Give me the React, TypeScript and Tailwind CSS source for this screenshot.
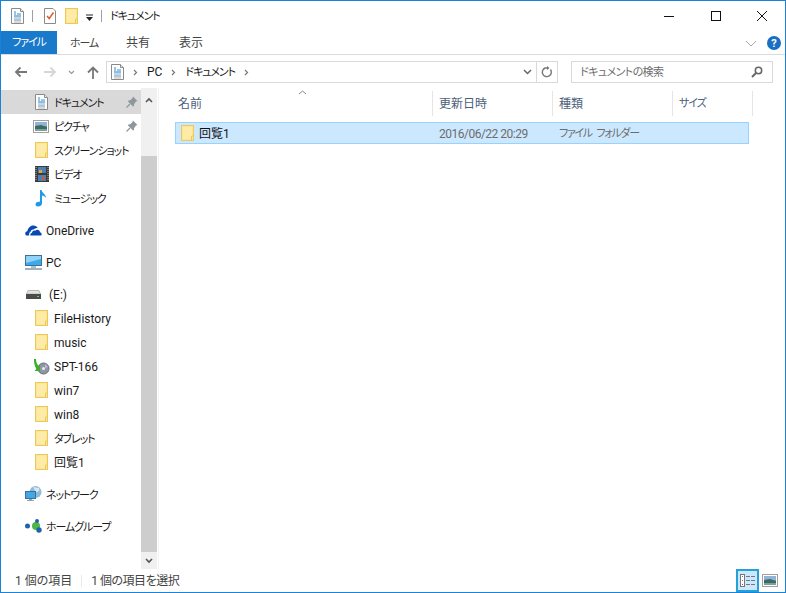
const kana = 'text-[11px] tracking-[-1.1px]';

function Folder({ className = '' }: { className?: string }) {
  return (
    <svg width="13" height="16" viewBox="0 0 13 16" className={className}>
      <rect x=".5" y=".5" width="12" height="15" fill="#fde68f" stroke="#ecc95c" />
      <rect x="2" y="2" width="9" height="12" fill="#feeba8" />
      <path d="M12 11H10.5V15" stroke="#ecc95c" fill="none" />
    </svg>
  );
}

function DocIcon() {
  return (
    <svg width="13" height="16" viewBox="0 0 13 16">
      <path d="M.5 .5H9.5L12.5 3.5V15.5H.5Z" fill="#fff" stroke="#8a8a8a" />
      <path d="M9.5 .5V3.5H12.5" fill="#e8e8e8" stroke="#8a8a8a" />
      <path d="M3 4H5M3 6H5" stroke="#2b8fd8" />
      <path d="M6 6H10" stroke="#2b8fd8" />
      <path d="M3 8H10" stroke="#1c7cc8" />
      <path d="M3 10H10" stroke="#6fb4e4" />
      <path d="M3 12H10" stroke="#7d8790" />
      <path d="M3 14H10" stroke="#b0b6bb" />
    </svg>
  );
}

function Pin() {
  return (
    <svg width="12" height="12" viewBox="0 0 12 12">
      <path d="M7 .5L11.5 5L10 5.5L8 8.2V10L7 10.5L1.8 5.3L2.5 4.5L4.2 4.2L6.5 2Z" fill="#8f979e" />
      <path d="M4 8L.5 11.5" stroke="#8f979e" strokeWidth="1.2" />
    </svg>
  );
}

function Picture() {
  return (
    <svg width="16" height="13" viewBox="0 0 16 13">
      <rect x=".5" y=".5" width="15" height="12" fill="#fff" stroke="#a0a0a0" />
      <rect x="2" y="2" width="12" height="4" fill="#8fb4d8" />
      <rect x="2" y="6" width="12" height="5" fill="#7ba39a" />
      <path d="M2 6L8 5L14 7V9H2Z" fill="#3f6a60" />
    </svg>
  );
}

function Film() {
  return (
    <svg width="14" height="16" viewBox="0 0 14 16">
      <rect width="14" height="16" fill="#3a3a3a" />
      <path d="M1 1V15M13 1V15" stroke="#bbb" strokeDasharray="1 1" />
      <rect x="3" y="1" width="8" height="6" fill="#4b7fb5" />
      <rect x="3" y="9" width="8" height="6" fill="#4b7fb5" />
      <rect x="4" y="4" width="3" height="3" fill="#d9a93a" />
      <rect x="7" y="11" width="3" height="3" fill="#c85a3a" />
    </svg>
  );
}

function Note() {
  return (
    <svg width="12" height="18" viewBox="0 0 12 18">
      <path d="M5 1H6.5C7 4 11 5 11 9C10 7.5 8.5 6.5 7 6.5V14.5C7 16.5 5 17.5 3 17.5C1.5 17.5 .5 16.5 .5 15.2C.5 13.5 2.5 12.3 5 12.8Z" fill="#1d9be8" />
    </svg>
  );
}

function Cloud() {
  return (
    <svg width="17" height="11" viewBox="0 0 17 11">
      <path d="M1 10.5C-.5 9 .2 6.5 2.3 6.3C3 2.5 6 .5 8.5 .5C10.5 .5 12 1.5 12.7 3C11 3 9.5 3.5 8.8 4.5C7 4.2 5.5 5.5 5.5 7C4.5 7.2 3.8 8.5 4.2 10.5Z" fill="#094ab2" />
      <path d="M5.5 10.5C5 9 5.8 8 7 8C7 6 9 5 10.2 5.8C11.5 3.8 15 4.5 15 7.2C16.5 7.5 17.3 9.5 16 10.5Z" fill="#094ab2" />
    </svg>
  );
}

function Monitor() {
  return (
    <svg width="17" height="15" viewBox="0 0 17 15">
      <rect x=".5" y=".5" width="16" height="10" fill="#3ea8ea" stroke="#3f6f93" />
      <path d="M1 1H16V4L1 8Z" fill="#8fd4f8" />
      <rect x="6" y="11" width="5" height="2" fill="#a9c0cf" />
      <rect x="0" y="13" width="17" height="2" fill="#9fb2c0" />
    </svg>
  );
}

function Drive() {
  return (
    <svg width="15" height="9" viewBox="0 0 15 9">
      <path d="M2 .5H13L14.5 4H.5Z" fill="#e2e2e2" stroke="#b8b8b8" />
      <rect y="4" width="15" height="5" fill="#4a4a4a" />
      <rect x="11" y="6" width="2" height="1" fill="#42e04a" />
    </svg>
  );
}

function Disc() {
  return (
    <svg width="17" height="17" viewBox="0 0 17 17">
      <circle cx="10.5" cy="10.5" r="5.5" fill="#8d96a3" stroke="#666d78" />
      <circle cx="10.5" cy="10.5" r="1.6" fill="#e8e8e8" />
      <path d="M12 6L15 9L12 10Z" fill="#c8b5d9" />
      <path d="M1 1H3C3 4 4 6 5.5 8L7 7V13H1.5L3.3 11C1.5 8 .8 4 1 1Z" fill="#3fae2a" />
    </svg>
  );
}

function Network() {
  return (
    <svg width="17" height="16" viewBox="0 0 17 16">
      <circle cx="10.5" cy="6" r="6" fill="#8fbad8" />
      <path d="M8 1C10 3 9 5 11 6C14 6 15 4 14 2Z" fill="#d8e6ef" />
      <rect x=".5" y="5.5" width="10" height="7" fill="#3ea8ea" stroke="#3f6f93" />
      <rect x="4" y="13" width="3" height="1" fill="#8fa3b0" />
      <rect x="2" y="14" width="7" height="1" fill="#8fa3b0" />
    </svg>
  );
}

function HomeGroup() {
  return (
    <svg width="17" height="14" viewBox="0 0 17 14">
      <circle cx="2.5" cy="7" r="2.5" fill="#1e62ad" />
      <circle cx="11" cy="7" r="4" fill="#4fb548" />
      <circle cx="12" cy="2" r="2" fill="#1e62ad" />
      <circle cx="14" cy="11" r="2.7" fill="#1e62ad" />
    </svg>
  );
}

function Check() {
  return (
    <svg width="12" height="16" viewBox="0 0 12 16">
      <path d="M.5 .5H9L11.5 3V15.5H.5Z" fill="#fff" stroke="#8a8a8a" />
      <path d="M3 8L5.2 10.5L9.5 4.5" stroke="#e2592a" strokeWidth="1.5" fill="none" />
    </svg>
  );
}

function Crumb() {
  return (
    <svg width="5" height="7" viewBox="0 0 5 7" className="ml-[9px]">
      <path d="M1 1L3.5 3.5L1 6" stroke="#777" strokeWidth="1.2" fill="none" />
    </svg>
  );
}

function NavRow({
  icon,
  label,
  indent = 'w-[53px] pl-[34px]',
  pin,
  selected,
}: {
  icon: React.ReactNode;
  label: string;
  indent?: string;
  pin?: boolean;
  selected?: boolean;
}) {
  const isKana = /[\u30A0-\u30FF]/.test(label);
  return (
    <div className={`h-6 flex items-center ${selected ? 'bg-[#d9d9d9]' : ''}`}>
      <div className={`${indent} flex items-center shrink-0`}>{icon}</div>
      <span className={`flex-1 pt-[2px] whitespace-nowrap ${isKana ? kana : ''}`}>{label}</span>
      {pin && (
        <span className="mr-[3px] flex">
          <Pin />
        </span>
      )}
    </div>
  );
}

const rootIndent = 'w-[45px] pl-[24px]';

function HeaderCell({ label, className }: { label: string; className: string }) {
  return (
    <div className={`${className} h-[25px] flex items-center border-r border-[#e5e5e5] text-[#4c607a] shrink-0`}>
      {label}
    </div>
  );
}

export default function App() {
  return (
    <div className="w-[786px] h-[593px] border border-[#1883d7] bg-white flex flex-col text-[12px] leading-none text-[#1a1a1a] overflow-hidden [font-family:Roboto,'Noto_Sans_CJK_JP',sans-serif] [font-feature-settings:'palt']">
      {/* title bar */}
      <div className="h-[30px] flex items-center shrink-0">
        <div className="ml-[10px] flex"><DocIcon /></div>
        <div className="ml-[8px] w-px h-[12px] bg-[#a0a0a0]" />
        <div className="ml-[11px] flex"><Check /></div>
        <div className="ml-[9px] flex"><Folder /></div>
        <svg width="9" height="8" viewBox="0 0 9 8" className="ml-[7px] mt-[3px]">
          <path d="M1 1H8" stroke="#222" />
          <path d="M1 3H8L4.5 7Z" fill="#222" />
        </svg>
        <div className="ml-[7px] w-px h-[12px] bg-[#a0a0a0]" />
        <span className={`ml-[8px] ${kana}`}>ドキュメント</span>
        <div className="ml-auto flex items-center">
          <svg width="47" height="30" viewBox="0 0 47 30"><path d="M18 15.5H28" stroke="#111" /></svg>
          <svg width="46" height="30" viewBox="0 0 46 30"><rect x="18.5" y="10.5" width="9" height="9" fill="none" stroke="#111" /></svg>
          <svg width="46" height="30" viewBox="0 0 46 30"><path d="M18 10L28 20M28 10L18 20" stroke="#111" /></svg>
        </div>
      </div>

      {/* ribbon tabs */}
      <div className="h-[24px] pt-[1px] flex items-stretch border-b border-[#dadbdc] shrink-0">
        <div className={`w-[56px] -mt-[1px] bg-[#1979ca] text-white flex items-center justify-center ${kana}`}>ファイル</div>
        <div className={`w-[54px] text-[#444] flex items-center justify-center ${kana}`}>ホーム</div>
        <div className="w-[54px] text-[#444] flex items-center justify-center">共有</div>
        <div className="w-[52px] text-[#444] flex items-center justify-center">表示</div>
        <div className="ml-auto flex items-center">
          <svg width="12" height="7" viewBox="0 0 12 7" className="mr-[10px]"><path d="M1 1L6 6L11 1" stroke="#aaa" fill="none" /></svg>
          <div className="w-[14px] h-[14px] mr-[4px] rounded-full bg-[#1a6fc2] text-white text-[11px] font-bold flex items-center justify-center">?</div>
        </div>
      </div>

      {/* address row */}
      <div className="h-[33px] pt-[1px] flex items-center shrink-0">
        <svg width="14" height="12" viewBox="0 0 14 12" className="ml-[13px]"><path d="M13 6H2M6.5 1.5L2 6L6.5 10.5" stroke="#777" strokeWidth="1.8" fill="none" /></svg>
        <svg width="14" height="12" viewBox="0 0 14 12" className="ml-[15px]"><path d="M1 6H12M7.5 1.5L12 6L7.5 10.5" stroke="#d6d6d6" strokeWidth="1.8" fill="none" /></svg>
        <svg width="7" height="5" viewBox="0 0 7 5" className="ml-[11px]"><path d="M1 1L3.5 3.5L6 1" stroke="#999" strokeWidth="1.2" fill="none" /></svg>
        <svg width="12" height="13" viewBox="0 0 12 13" className="ml-[12px]"><path d="M6 13V2M1 6.5L6 1.5L11 6.5" stroke="#777" strokeWidth="1.8" fill="none" /></svg>
        <div className="ml-[7px] w-[452px] h-[22px] border border-[#d9d9d9] flex items-center shrink-0">
          <div className="ml-[4px] flex"><DocIcon /></div>
          <Crumb />
          <span className="ml-[9px]">PC</span>
          <Crumb />
          <span className={`ml-[9px] ${kana}`}>ドキュメント</span>
          <Crumb />
          <div className="ml-auto flex items-center h-full">
            <svg width="9" height="6" viewBox="0 0 9 6" className="mr-[4px]"><path d="M1 1L4.5 4.5L8 1" stroke="#666" strokeWidth="1.5" fill="none" /></svg>
            <div className="w-px h-full bg-[#d9d9d9]" />
            <svg width="20" height="12" viewBox="0 0 20 12">
              <path d="M13.5 3.5A4.5 4.5 0 1 1 8 2H11" stroke="#777" strokeWidth="1.4" fill="none" />
              <path d="M10 0V4L12.5 2Z" fill="#777" />
            </svg>
          </div>
        </div>
        <div className="ml-[13px] w-[202px] h-[22px] border border-[#d9d9d9] flex items-center pl-[8px] text-[#6d6d6d] shrink-0">
          <span className="text-[11px] tracking-[-0.6px]">ドキュメントの検索</span>
          <svg width="12" height="12" viewBox="0 0 12 12" className="ml-auto mr-[9px]">
            <circle cx="7.5" cy="4.5" r="3.2" fill="none" stroke="#666" strokeWidth="1.5" />
            <path d="M5 7L1 11" stroke="#666" strokeWidth="2" />
          </svg>
        </div>
      </div>

      {/* body */}
      <div className="flex-1 flex min-h-0">
        <div className="w-[140px] pt-[2px] shrink-0 overflow-hidden">
          <NavRow selected pin icon={<DocIcon />} label="ドキュメント" />
          <NavRow pin icon={<span className="flex -ml-[2px]"><Picture /></span>} label="ピクチャ" />
          <NavRow icon={<Folder />} label="スクリーンショット" />
          <NavRow icon={<Film />} label="ビデオ" />
          <NavRow icon={<Note />} label="ミュージック" />
          <div className="h-2" />
          <NavRow indent={rootIndent} icon={<Cloud />} label="OneDrive" />
          <div className="h-2" />
          <NavRow indent={rootIndent} icon={<Monitor />} label="PC" />
          <div className="h-2" />
          <NavRow indent="w-[48px] pl-[25px]" icon={<Drive />} label="(E:)" />
          <NavRow icon={<Folder />} label="FileHistory" />
          <NavRow icon={<Folder />} label="music" />
          <NavRow icon={<span className="flex -ml-[2px]"><Disc /></span>} label="SPT-166" />
          <NavRow icon={<Folder />} label="win7" />
          <NavRow icon={<Folder />} label="win8" />
          <NavRow icon={<Folder />} label="タブレット" />
          <NavRow icon={<Folder />} label="回覧1" />
          <div className="h-2" />
          <NavRow indent={rootIndent} icon={<Network />} label="ネットワーク" />
          <div className="h-2" />
          <NavRow indent={rootIndent} icon={<HomeGroup />} label="ホームグループ" />
        </div>

        {/* nav scrollbar */}
        <div className="w-[16px] bg-[#f0f0f0] flex flex-col shrink-0">
          <div className="h-[68px] pt-[9px] flex justify-center">
            <svg width="8" height="6" viewBox="0 0 8 6"><path d="M1 5L4 2L7 5" stroke="#555" strokeWidth="1.6" fill="none" /></svg>
          </div>
          <div className="flex-1 bg-[#cdcdcd]" />
          <div className="h-[17px] flex items-center justify-center">
            <svg width="8" height="6" viewBox="0 0 8 6"><path d="M1 1L4 4L7 1" stroke="#555" strokeWidth="1.6" fill="none" /></svg>
          </div>
        </div>
        <div className="w-px ml-px bg-[#f2f2f2] shrink-0" />

        {/* file list */}
        <div className="flex-1 min-w-0 relative pl-[16px]">
          <svg width="9" height="5" viewBox="0 0 9 5" className="absolute left-[139px] top-[2px]">
            <path d="M1 4L4.5 1L8 4" stroke="#888" fill="none" />
          </svg>
          <div className="flex mt-[3px] -ml-[2px]">
            <HeaderCell label="名前" className="w-[260px] pl-[5px]" />
            <HeaderCell label="更新日時" className="w-[120px] pl-[6px]" />
            <HeaderCell label="種類" className="w-[120px] pl-[6px]" />
            <HeaderCell label="サイズ" className={`w-[80px] pl-[6px] ${kana}`} />
          </div>
          <div className="mt-[6px] w-[574px] h-[22px] bg-[#cce8ff] border border-[#99d1ff] flex items-center">
            <div className="ml-[5px] w-[18px] flex"><Folder /></div>
            <span className="w-[240px] pt-[1px] text-[#111]">回覧1</span>
            <span className="w-[120px] pt-[1px] tracking-[-0.5px] text-[#6d6d6d]">2016/06/22 20:29</span>
            <span className="pt-[1px] whitespace-pre text-[#6d6d6d] text-[11px] tracking-[-1.3px] [word-spacing:3px]">ファイル フォルダー</span>
          </div>
        </div>
      </div>

      {/* status bar */}
      <div className="h-[23px] flex items-center text-[#444] shrink-0">
        <span className="ml-[14px]">1 個の項目</span>
        <div className="ml-[9px] w-px h-[12px] bg-[#e8e8e8]" />
        <span className="ml-[9px] tracking-[-0.5px]">1 個の項目を選択</span>
        <div className="ml-auto mr-[4px] flex items-center h-full">
          <div className="w-[23px] h-full bg-[#cce8ff] border-2 border-[#26a0da] flex items-center justify-center">
            <svg width="16" height="13" viewBox="0 0 16 13">
              <rect x=".5" y=".5" width="4" height="12" fill="#fff" stroke="#777" />
              <path d="M2 2.5H3M2 6.5H3" stroke="#777" />
              <path d="M2 10.5H3" stroke="#c0392b" />
              <path d="M6 2.5H10M11 2.5H15M6 6.5H10M11 6.5H15M6 10.5H10M11 10.5H15" stroke="#777" />
            </svg>
          </div>
          <div className="w-[22px] h-full flex items-center justify-center">
            <Picture />
          </div>
        </div>
      </div>
    </div>
  );
}
